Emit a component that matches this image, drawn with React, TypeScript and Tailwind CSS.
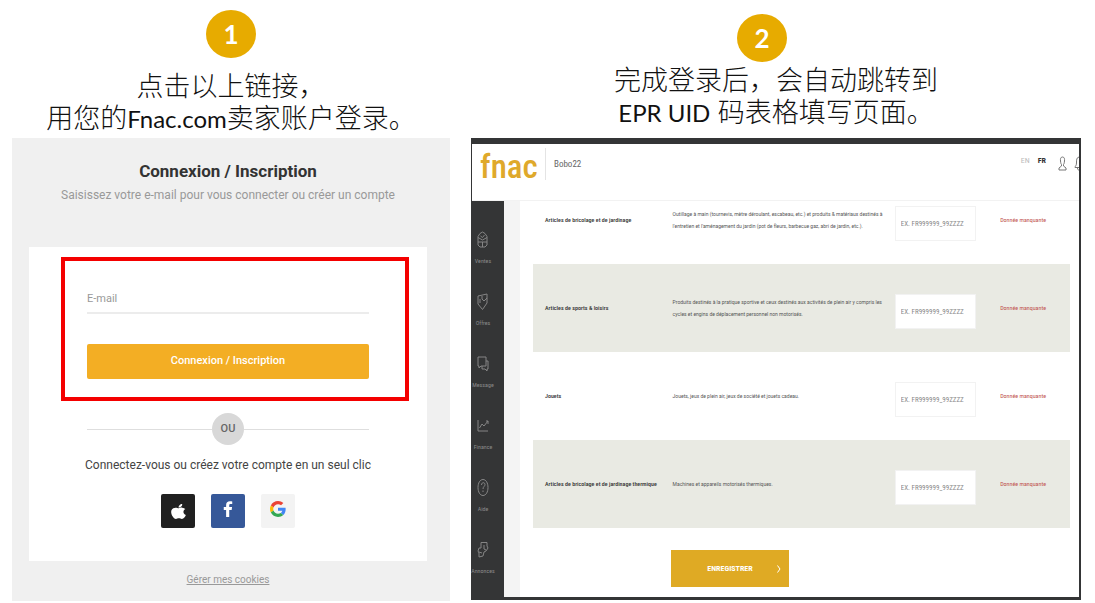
import React from 'react';

const PLACEHOLDER = 'EX. FR999999_99ZZZZ';

const categories = [
  {
    id: 'garden',
    label: 'Articles de bricolage et de jardinage',
    lines: [
      'Outillage à main (tournevis, mètre déroulant, escabeau, etc.) et produits & matériaux destinés à',
      "l'entretien et l'aménagement du jardin (pot de fleurs, barbecue gaz, abri de jardin, etc.).",
    ],
  },
  {
    id: 'sports',
    label: 'Articles de sports & loisirs',
    lines: [
      'Produits destinés à la pratique sportive et ceux destinés aux activités de plein air y compris les',
      'cycles et engins de déplacement personnel non motorisés.',
    ],
  },
  {
    id: 'toys',
    label: 'Jouets',
    lines: ['Jouets, jeux de plein air, jeux de société et jouets cadeau.'],
  },
  {
    id: 'engine',
    label: 'Articles de bricolage et de jardinage thermique',
    lines: ['Machines et appareils motorisés thermiques.'],
  },
];

const navItems = [
  { label: 'Ventes', d: 'M1 5.500 3 2.500 5.500 1 8 2.500l2 3V14l-2 2H3l-2-2zM1 6.500 5.500 9 10 6.500M1 11h9M5.500 11v5M3.500 5l2 1.500 2-2.500' },
  { label: 'Offres', d: 'M1 3 10 1V10L5.500 16.500 1 11zM3 6v4M5 3v3l2 2 3-3' },
  { label: 'Message', d: 'M1 2h8v9H4l-2 2v-2H1zM9 6h2v8h-1v2l-2-2H5v-3' },
  { label: 'Finance', d: 'M1 3v11h10M2.500 11l2.500-4 2 2 4-5M9 4h2v3' },
  { label: 'Aide', d: 'M6 .5c3 0 5 3.500 5 8s-2 8-5 8-5-3.500-5-8 2-8 5-8M4.500 6c0-3 3.500-3 3.500-.5C8 7.500 6 7.500 6 10M6 11.500v1.500' },
  { label: 'Annonces', d: 'M4 1.500h6V5l1 2-2 3-2 1-1 4-4 1V12l-1-2 1-3 2 0zM7 4v4l2 1M2 11l3 1' },
];

function StepBadge({ n }: { n: number }) {
  return (
    <span className="flex h-12 w-[50px] items-center justify-center rounded-[50%] bg-[#e7ab00] font-[Lato,sans-serif] text-[26px] font-bold text-white">
      {n}
    </span>
  );
}

function AppleIcon() {
  return (
    <svg viewBox="0 0 384 512" className="h-[17px] w-[15px]" fill="#fff" preserveAspectRatio="none" aria-hidden="true">
      <path d="M318.700 268.700c-.2-36.700 16.400-64.400 50-84.800-18.800-26.900-47.200-41.700-84.700-44.600-35.500-2.800-74.300 20.700-88.500 20.700-15 0-49.400-19.700-76.400-19.700C63.300 141.200 4 184.800 4 273.500q0 39.300 14.400 81.200c12.800 36.700 59 126.700 107.200 125.200 25.200-.6 43-17.900 75.800-17.900 31.800 0 48.300 17.900 76.400 17.900 48.600-.7 90.400-82.500 102.600-119.300-65.200-30.700-61.700-90-61.700-91.900zm-56.600-164.200c27.300-32.400 24.800-61.900 24-72.500-24.100 1.400-52 16.400-67.900 34.900-17.500 19.800-27.800 44.300-25.600 71.900 26.100 2 49.900-11.400 69.500-34.300z" />
    </svg>
  );
}

function FacebookIcon() {
  return (
    <svg viewBox="0 0 10 17" className="mb-1 h-4 w-[10px]" fill="#fff" aria-hidden="true">
      <path d="M3 17V9.500H.5v-3H3V4.300C3 1.500 4.600.3 7 .3c1.100 0 2 .1 2.500.2v2.700H7.800c-1.300 0-1.500.6-1.500 1.500v1.800h3l-.4 3H6.300V17z" />
    </svg>
  );
}

function GoogleIcon() {
  return (
    <svg viewBox="0 0 48 48" className="mb-1 size-4" aria-hidden="true">
      <path fill="#EA4335" d="M24 9.500c3.540 0 6.710 1.220 9.210 3.600l6.850-6.850C35.900 2.380 30.470 0 24 0 14.620 0 6.510 5.380 2.560 13.220l7.980 6.190C12.430 13.720 17.740 9.500 24 9.500z" />
      <path fill="#4285F4" d="M46.980 24.550c0-1.570-.15-3.090-.38-4.550H24v9.020h12.940c-.58 2.960-2.260 5.480-4.780 7.180l7.730 6c4.510-4.180 7.090-10.360 7.090-17.650z" />
      <path fill="#FBBC05" d="M10.530 28.590c-.48-1.450-.76-2.990-.76-4.590s.27-3.140.76-4.590l-7.980-6.190C.92 16.460 0 20.120 0 24c0 3.880.92 7.540 2.560 10.780z" />
      <path fill="#34A853" d="M24 48c6.480 0 11.930-2.130 15.890-5.810l-7.730-6c-2.150 1.450-4.920 2.300-8.160 2.300-6.260 0-11.570-4.220-13.470-9.910l-7.980 6.190C6.510 42.620 14.620 48 24 48z" />
    </svg>
  );
}

function LoginPanel() {
  return (
    <section className="bg-[#f0f0f0] pt-5 pr-[23px] pb-3 pl-[17px] font-[Roboto,sans-serif]">
      <h2 className="text-center text-[17px] leading-[26px] font-bold text-[#333]">Connexion / Inscription</h2>
      <p className="text-center text-xs leading-[22px] text-[#999]">
        Saisissez votre e-mail pour vous connecter ou créer un compte
      </p>

      <div className="mt-[41px] bg-white pt-2.5 pb-[33px]">
        <form
          className="mr-[18px] ml-8 border-4 border-[#f40000] pt-[25px] pr-9 pb-[18px] pl-[22px]"
          onSubmit={(e) => e.preventDefault()}
        >
          <input
            type="email"
            aria-label="E-mail"
            placeholder="E-mail"
            className="block h-7 w-full border-b-2 border-[#ececec] bg-transparent pb-0.5 text-[11px] outline-none placeholder:text-[#999]"
          />
          <button
            type="submit"
            className="mt-[30px] block h-[35px] w-full rounded-xs bg-[#f3ae24] text-[11px] font-medium text-white"
          >
            Connexion / Inscription
          </button>
        </form>

        <div className="mx-[58px] mt-3 flex items-center">
          <span className="h-px flex-1 bg-[#dedede]" />
          <span className="flex size-8 items-center justify-center rounded-full bg-[#d8d8d8] text-[11px] font-medium text-[#666]">
            OU
          </span>
          <span className="h-px flex-1 bg-[#dedede]" />
        </div>

        <p className="mt-2.5 text-center text-xs leading-5 text-[#444]">
          Connectez-vous ou créez votre compte en un seul clic
        </p>

        <div className="mt-[19px] flex justify-center gap-4">
          <button type="button" aria-label="Apple" className="flex size-[34px] items-center justify-center rounded-xs bg-[#202020]">
            <AppleIcon />
          </button>
          <button type="button" aria-label="Facebook" className="flex size-[34px] items-center justify-center rounded-xs bg-[#365899]">
            <FacebookIcon />
          </button>
          <button type="button" aria-label="Google" className="flex size-[34px] items-center justify-center rounded-xs bg-[#f3f3f3]">
            <GoogleIcon />
          </button>
        </div>
      </div>

      <p className="mt-2.5 text-center text-[10px] leading-[18px] text-[#999]">
        <a href="#cookies" className="underline">Gérer mes cookies</a>
      </p>
    </section>
  );
}

function SellerPanel() {
  return (
    <section className="border-t-[6px] border-r-2 border-b-[3px] border-l border-[#343536] bg-white font-['Roboto_Condensed',Roboto,sans-serif]">
      <header className="flex h-[57px] items-start border-b border-[#f2f2f2] pl-2">
        <span className="w-[57px] pt-1 text-[33px] leading-[38px] font-medium text-[#dfa92b]">fnac</span>
        <span className="mt-1 ml-2 h-8 w-px bg-[#e4e4e4]" />
        <span className="mt-[14px] ml-2 text-[9px] leading-3 text-[#666]">Bobo22</span>
        <nav aria-label="Langue" className="mt-[11px] ml-auto flex gap-2 text-[8px] leading-3">
          <a href="#en" className="text-[#bbb]">EN</a>
          <a href="#fr" className="font-bold text-[#333]">FR</a>
        </nav>
        <svg viewBox="0 0 9 15" className="mt-3 ml-3 h-[15px] w-[9px]" fill="none" stroke="#777" aria-hidden="true">
          <path d="M4.500 1C2.500 1 2.300 3 2.500 5S3 8 3.500 8.500v1.500L1 12v2h7v-2l-2.500-2V8.500C6 8 6.300 7 6.500 5S6.500 1 4.500 1z" />
        </svg>
        <svg viewBox="0 0 5 15" className="mt-3 ml-[7px] h-[15px] w-[5px]" fill="none" stroke="#777" aria-hidden="true">
          <path d="M5 1C2.500 1.500 2.500 4 2.500 7S1 10 1 11.500h4M3.500 12c0 1.500.5 2 1.500 2" />
        </svg>
      </header>

      <div className="flex">
        <nav aria-label="Menu" className="flex w-8 flex-col bg-[#343536] pt-[30px]">
          {navItems.map((item) => (
            <a
              key={item.label}
              href="#menu"
              className="flex h-[62px] w-[22px] flex-col items-center text-[6px] leading-[10px] text-[#8a8a8a] last:h-auto"
            >
              <svg viewBox="0 0 12 17" className="mb-2 h-[17px] w-3 shrink-0" fill="none" stroke="#858585" strokeWidth="1" aria-hidden="true">
                <path d={item.d} />
              </svg>
              {item.label}
            </a>
          ))}
        </nav>
        <div className="w-4 bg-[#f4f4f4]" />

        <div className="min-w-0 flex-1 pr-[9px] pb-[10px] pl-[13px]">
          <div className="flex h-[327px] flex-col justify-end overflow-hidden">
            <table className="w-full table-fixed text-left">
              <colgroup>
                <col className="w-[26%]" />
                <col className="w-[41%]" />
                <col className="w-[20%]" />
                <col className="w-[13%]" />
              </colgroup>
              <tbody>
                {categories.map((c) => (
                  <tr key={c.id} className="h-[88px] even:bg-[#e9eae3]">
                    <th scope="row" className="pl-3 text-[6px] leading-3 font-medium whitespace-nowrap text-[#333]">
                      <label htmlFor={c.id}>{c.label}</label>
                    </th>
                    <td className="font-[Roboto,sans-serif] text-[5px] leading-3 whitespace-nowrap text-[#555]">
                      {c.lines.map((line) => (
                        <span key={line} className="block">{line}</span>
                      ))}
                    </td>
                    <td className="pt-[7px] pl-0.5">
                      <input
                        id={c.id}
                        type="text"
                        placeholder={PLACEHOLDER}
                        className="block h-[35px] w-[81px] border border-[#f2f2f2] bg-white pl-[5px] text-[7px] outline-none placeholder:text-[#888]"
                      />
                    </td>
                    <td className="text-[6px] leading-3 whitespace-nowrap text-[#c0504d]">Donnée manquante</td>
                  </tr>
                ))}
              </tbody>
            </table>
          </div>

          <button
            type="button"
            className="mt-[22px] ml-[138px] grid h-[37px] w-[118px] grid-cols-[1fr_auto_1fr] items-center bg-[#dfaa24] px-2 text-[8px] font-bold text-white"
          >
            <span className="col-start-2">ENREGISTRER</span>
            <svg viewBox="0 0 4 8" className="h-2 w-1 justify-self-end" fill="none" stroke="#fff" aria-hidden="true">
              <path d="M.5.5 3 4 .5 7.500" />
            </svg>
          </button>
        </div>
      </div>
    </section>
  );
}

export default function App() {
  return (
    <main className="flex min-h-screen items-start gap-[21px] bg-white pr-3.5 pl-3">
      <div className="min-w-0 flex-[438] pt-2.5">
        <div className="flex justify-center">
          <StepBadge n={1} />
        </div>
        <h1 className="mt-3 mb-1 text-center font-[Lato,'Noto_Sans_CJK_SC',sans-serif] text-[27px] leading-8 font-light whitespace-nowrap text-[#111]" lang="zh-CN">
          点击以上链接，<br />
          用您的<span className="text-2xl leading-none font-normal">Fnac.com</span>卖家账户登录。
        </h1>
        <LoginPanel />
      </div>

      <div className="min-w-0 flex-[610] pt-3.5">
        <div className="flex justify-center pr-7">
          <StepBadge n={2} />
        </div>
        <h1 className="mt-0.5 mb-2.5 text-center font-[Lato,'Noto_Sans_CJK_SC',sans-serif] text-[27px] leading-8 font-light whitespace-nowrap text-[#111]" lang="zh-CN">
          完成登录后，会自动跳转到<br />
          <span className="text-2xl leading-none font-normal">EPR UID</span> 码表格填写页面。
        </h1>
        <SellerPanel />
      </div>
    </main>
  );
}
